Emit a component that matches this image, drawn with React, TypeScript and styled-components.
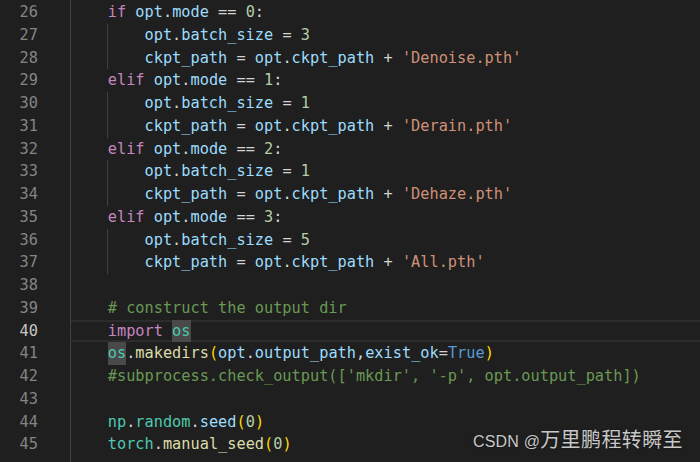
import React from 'react';
import styled, { createGlobalStyle } from 'styled-components';

const Global = createGlobalStyle`
  html, body { margin: 0; padding: 0; background: #1f1f1f; }
  body { width: 700px; height: 462px; overflow: hidden; }
`;

type Kind = 'kw' | 'v' | 'op' | 'n' | 's' | 'c' | 'm' | 'f' | 'b' | 'p';

const palette: Record<Kind, string> = {
  kw: '#c586c0',
  v: '#9cdcfe',
  op: '#d4d4d4',
  n: '#b5cea8',
  s: '#ce9178',
  c: '#6a9955',
  m: '#4ec9b0',
  f: '#dcdcaa',
  b: '#569cd6',
  p: '#ffd700',
};

const LH = '22.75px';

const Editor = styled.div`
  position: relative;
  display: flex;
  width: 700px;
  height: 462px;
  overflow: hidden;
  background: #1f1f1f;
  font-family: "DejaVu Sans Mono", "Liberation Mono", monospace;
  font-size: 15.28px;
`;

const Gutter = styled.div`
  flex: none;
  width: 70px;
  padding-top: 1px;
  display: flex;
  flex-direction: column;
  box-sizing: border-box;
`;

const LineNo = styled.div<{ $active?: boolean }>`
  height: ${LH};
  line-height: ${LH};
  text-align: right;
  padding-right: 32px;
  color: ${(p) => (p.$active ? '#c6c6c6' : '#858585')};
`;

const Code = styled.div`
  flex: 1;
  padding-top: 1px;
  border-left: 1px solid #404040;
  display: flex;
  flex-direction: column;
`;

const Line = styled.div<{ $active?: boolean }>`
  display: flex;
  align-items: stretch;
  height: ${LH};
  box-shadow: ${(p) =>
    p.$active ? 'inset 0 2px 0 #2c2c2c, inset 0 -2px 0 #2c2c2c' : 'none'};
`;

const Indent = styled.span<{ $guide?: boolean }>`
  flex: none;
  width: 4ch;
  box-shadow: ${(p) => (p.$guide ? '-1px 0 0 #404040' : 'none')};
`;

const Text = styled.span`
  white-space: pre;
  line-height: ${LH};
`;

const Tok = styled.span<{ $kind: Kind; $hl?: boolean }>`
  color: ${(p) => palette[p.$kind]};
  ${(p) =>
    p.$hl
      ? `display: inline-block; height: ${LH}; background: #494949;`
      : ''}
`;

const Watermark = styled.div`
  position: absolute;
  right: 17px;
  bottom: 8px;
  line-height: 24px;
  color: #c8c8c8;
  text-shadow: 0 0 2px rgba(0, 0, 0, 0.5);
  white-space: nowrap;
`;

const WmLatin = styled.span`
  font-family: "Liberation Sans", Arial, sans-serif;
  font-size: 16px;
  letter-spacing: 0.2px;
`;

const WmCjk = styled.span`
  font-family: "Noto Sans CJK SC", sans-serif;
  font-size: 20px;
  letter-spacing: 0.4px;
`;

type T = [Kind, string, boolean?];
type L = { n: number; depth: number; toks: T[]; active?: boolean };

const elif = (d: string): T[] => [
  ['kw', 'elif'], ['op', ' '], ['v', 'opt'], ['op', '.'], ['v', 'mode'], ['op', ' == '], ['n', d], ['op', ':'],
];
const batch = (d: string): T[] => [
  ['v', 'opt'], ['op', '.'], ['v', 'batch_size'], ['op', ' = '], ['n', d],
];
const ckpt = (s: string): T[] => [
  ['v', 'ckpt_path'], ['op', ' = '], ['v', 'opt'], ['op', '.'], ['v', 'ckpt_path'], ['op', ' + '], ['s', `'${s}'`],
];

const lines: L[] = [
  { n: 26, depth: 1, toks: [['kw', 'if'], ['op', ' '], ['v', 'opt'], ['op', '.'], ['v', 'mode'], ['op', ' == '], ['n', '0'], ['op', ':']] },
  { n: 27, depth: 2, toks: batch('3') },
  { n: 28, depth: 2, toks: ckpt('Denoise.pth') },
  { n: 29, depth: 1, toks: elif('1') },
  { n: 30, depth: 2, toks: batch('1') },
  { n: 31, depth: 2, toks: ckpt('Derain.pth') },
  { n: 32, depth: 1, toks: elif('2') },
  { n: 33, depth: 2, toks: batch('1') },
  { n: 34, depth: 2, toks: ckpt('Dehaze.pth') },
  { n: 35, depth: 1, toks: elif('3') },
  { n: 36, depth: 2, toks: batch('5') },
  { n: 37, depth: 2, toks: ckpt('All.pth') },
  { n: 38, depth: 0, toks: [] },
  { n: 39, depth: 1, toks: [['c', '# construct the output dir']] },
  { n: 40, depth: 1, active: true, toks: [['kw', 'import'], ['op', ' '], ['m', 'os', true]] },
  {
    n: 41, depth: 1, toks: [
      ['m', 'os', true], ['op', '.'], ['f', 'makedirs'], ['p', '('], ['v', 'opt'], ['op', '.'], ['v', 'output_path'],
      ['op', ','], ['v', 'exist_ok'], ['op', '='], ['b', 'True'], ['p', ')'],
    ],
  },
  { n: 42, depth: 1, toks: [['c', "#subprocess.check_output(['mkdir', '-p', opt.output_path])"]] },
  { n: 43, depth: 0, toks: [] },
  { n: 44, depth: 1, toks: [['m', 'np'], ['op', '.'], ['m', 'random'], ['op', '.'], ['v', 'seed'], ['p', '('], ['n', '0'], ['p', ')']] },
  { n: 45, depth: 1, toks: [['m', 'torch'], ['op', '.'], ['f', 'manual_seed'], ['p', '('], ['n', '0'], ['p', ')']] },
];

export default function App() {
  return (
    <>
      <Global />
      <Editor>
        <Gutter>
          {lines.map((l) => (
            <LineNo key={l.n} $active={l.active}>{l.n}</LineNo>
          ))}
        </Gutter>
        <Code>
          {lines.map((l) => (
            <Line key={l.n} $active={l.active}>
              {Array.from({ length: l.depth }).map((_, i) => (
                <Indent key={i} $guide={i > 0} />
              ))}
              <Text>
                {l.toks.map(([k, t, hl], i) => (
                  <Tok key={i} $kind={k} $hl={hl}>{t}</Tok>
                ))}
              </Text>
            </Line>
          ))}
        </Code>
        <Watermark>
          <WmLatin>CSDN @</WmLatin>
          <WmCjk>万里鹏程转瞬至</WmCjk>
        </Watermark>
      </Editor>
    </>
  );
}
